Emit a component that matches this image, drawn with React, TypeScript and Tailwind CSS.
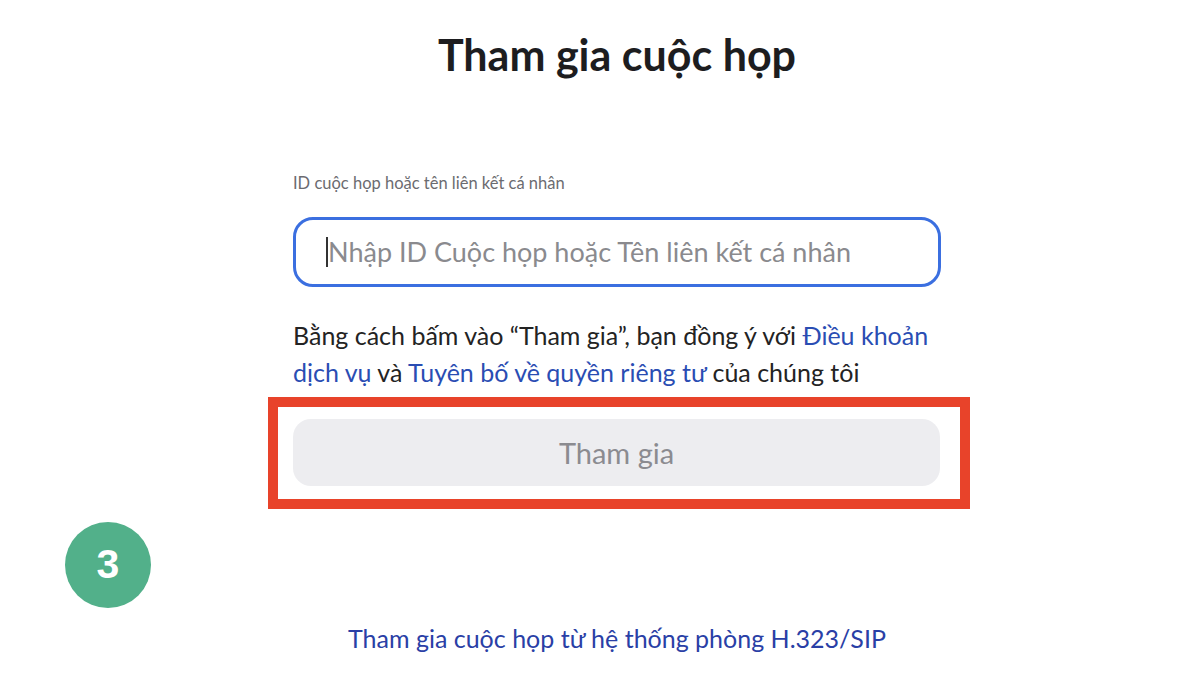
export default function App() {
  return (
    <div
      className="relative h-[675px] w-[1200px] overflow-hidden bg-white"
      style={{ fontFamily: "Lato, 'Noto Sans', sans-serif" }}
    >
      <div className="flex justify-center pl-[34px]">
        <div className="flex w-[648px] flex-col">
          <h1 className="mt-[26px] text-center text-[43px] font-bold leading-[58px] text-[#1d1d1f]">
            Tham gia cuộc họp
          </h1>

          <label className="mt-[87px] text-[16.5px] leading-[24px] text-[#6b6b70]">
            ID cuộc họp hoặc tên liên kết cá nhân
          </label>

          <div className="mt-[22px] flex h-[70px] items-center rounded-[20px] border-[3px] border-[#3b6fe0] pl-[30px]">
            <span className="h-[30px] w-[2px] bg-[#333]" />
            <span className="text-[27px] text-[#8a8a8e]">
              Nhập ID Cuộc họp hoặc Tên liên kết cá nhân
            </span>
          </div>

          <p className="mt-[30px] text-[25px] leading-[37px] text-[#232323]">
            Bằng cách bấm vào “Tham gia”, bạn đồng ý với{" "}
            <span className="text-[#2a4db3]">Điều khoản dịch vụ</span> và{" "}
            <span className="text-[#2a4db3]">Tuyên bố về quyền riêng tư</span>{" "}
            của chúng tôi
          </p>

          <div className="mt-[6px] -ml-[25px] -mr-[29px] border-[10px] border-[#e8432a] pb-[13px] pl-[15px] pr-[20px] pt-[12px]">
            <div className="flex h-[67px] items-center justify-center rounded-[18px] bg-[#ededf0] text-[29px] text-[#8b8b90]">
              Tham gia
            </div>
          </div>

          <div className="mt-[112px] text-center text-[25px] leading-[34px] text-[#2a3fa6]">
            Tham gia cuộc họp từ hệ thống phòng H.323/SIP
          </div>
        </div>
      </div>

      <div
        className="absolute left-[65px] top-[522px] flex h-[86px] w-[86px] items-center justify-center rounded-full bg-[#52b08a] text-[41px] font-bold text-white"
        style={{ fontFamily: "'Liberation Sans', Arial, sans-serif" }}
      >
        3
      </div>
    </div>
  );
}
